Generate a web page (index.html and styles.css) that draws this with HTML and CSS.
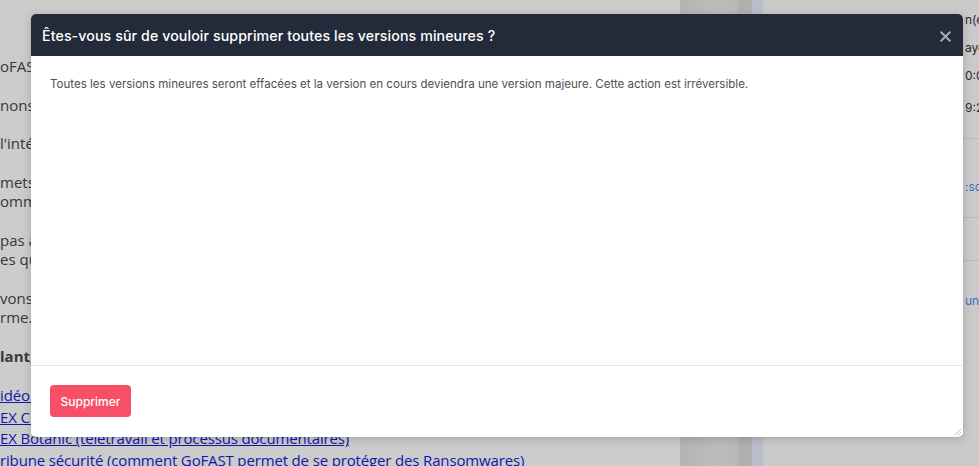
FILE: index.html
```html
<!DOCTYPE html>
<html lang="fr">
<head>
<meta charset="utf-8">
<title>Supprimer les versions mineures</title>
<link rel="stylesheet" href="styles.css">
</head>
<body>
<div class="page">
  <div class="main">
    <div class="top-strip"></div>
    <p class="para">oFAST est une plateforme collaborative souveraine.</p>
    <p class="para">nonsieur, madame, voici la présentation de la solution.</p>
    <p class="para">l'intégration avec vos outils existants est simple.</p>
    <p class="para">mets de partager vos documents et de travailler en<br>ommunauté avec vos collègues en toute sécurité.</p>
    <p class="para">pas à pas, découvrez les fonctionnalités principales<br>es que vous pouvez utiliser au quotidien.</p>
    <p class="para">vons préparé une série de vidéos sur la<br>rme.</p>
    <p class="para bold">lant, voici les liens :</p>
    <ul class="links">
      <li><a href="#">idéo de présentation de GoFAST</a></li>
      <li><a href="#">EX CD (retour d'expérience client)</a></li>
      <li><a href="#">EX Botanic (teletravail et processus documentaires)</a></li>
      <li><a href="#">ribune sécurité (comment GoFAST permet de se protéger des Ransomwares)</a></li>
    </ul>
  </div>
  <div class="gutter"></div>
  <div class="gutter-mid"></div>
  <div class="gutter-blue"></div>
  <div class="aside">
    <div class="aside-row first">n(e)</div>
    <div class="aside-row">ayonnement</div>
    <div class="aside-row">0:03</div>
    <div class="aside-row last">9:27</div>
    <div class="aside-sep"></div>
    <div class="aside-row link">:sources</div>
    <div class="aside-sep"></div>
    <div class="aside-sep gap"></div>
    <div class="aside-row link low">unité</div>
  </div>
</div>

<div class="overlay"></div>

<div class="modal" role="dialog" aria-modal="true">
  <div class="modal-header">
    <h1 class="modal-title">Êtes-vous sûr de vouloir supprimer toutes les versions mineures ?</h1>
    <button class="modal-close" aria-label="Fermer">
      <svg width="11" height="11" viewBox="0 0 11 11"><path d="M1.2 1.2L9.8 9.8M9.8 1.2L1.2 9.8" stroke="currentColor" stroke-width="2" stroke-linecap="round"/></svg>
    </button>
  </div>
  <div class="modal-body">
    <p class="modal-text">Toutes les versions mineures seront effacées et la version en cours deviendra une version majeure. Cette action est irréversible.</p>
  </div>
  <div class="modal-footer">
    <button class="btn-danger">Supprimer</button>
  </div>
  <div class="resize-handle"></div>
</div>
</body>
</html>
```

FILE: styles.css
```css
html, body {
  margin: 0;
  padding: 0;
}
body {
  width: 979px;
  height: 466px;
  overflow: hidden;
  position: relative;
  background: #fff;
  font-family: "Open Sans", "Noto Sans", sans-serif;
}
.page {
  display: flex;
  height: 466px;
}
.main {
  width: 680px;
  flex: none;
  overflow: hidden;
  color: #474747;
  font-size: 15px;
  line-height: 19.5px;
  white-space: nowrap;
}
.top-strip {
  height: 57px;
}
.para {
  margin: 0 0 19px 0;
}
.bold {
  font-weight: 700;
}
.links {
  list-style: none;
  margin: 0;
  padding: 0;
  font-size: 15px;
  letter-spacing: -0.15px;
  line-height: 21.7px;
}
.links a {
  color: #1b1bd6;
  text-decoration: underline;
}
.gutter {
  width: 58px;
  flex: none;
  background: linear-gradient(90deg, #e2e2e2, #ececec 60%, #e8e8e8);
}
.gutter-mid {
  width: 14px;
  flex: none;
  background: #dddddd;
}
.gutter-blue {
  width: 11px;
  flex: none;
  background: #eaeefa;
}
.aside {
  flex: 1;
  overflow: hidden;
  background: #fdfdfd;
  padding-left: 202px;
  font-family: "Inter", "Noto Sans", sans-serif;
  font-size: 12px;
  color: #333;
  white-space: nowrap;
}
.aside-row {
  height: 28px;
  line-height: 28px;
}
.aside-row.first {
  margin-top: 6px;
}
.aside-row.last {
  height: 32px;
  line-height: 36px;
}
.aside-sep {
  margin-left: -202px;
  height: 1px;
  background: #e6e6e6;
  margin-top: 16px;
}
.aside-row.link {
  color: #4a8cf0;
  margin-top: 34px;
  height: 28px;
}
.aside-sep.gap {
  margin-top: 42px;
}
.aside-row.low {
  margin-top: 26px;
}

.overlay {
  position: absolute;
  inset: 0;
  background: rgba(0, 0, 0, 0.2);
}

.modal {
  position: absolute;
  left: 31px;
  top: 14px;
  width: 932px;
  height: 423px;
  background: #fff;
  border-radius: 5px;
  box-shadow: 0 2px 10px rgba(0, 0, 0, 0.18);
  display: flex;
  flex-direction: column;
  overflow: hidden;
  font-family: "Inter", "Noto Sans", sans-serif;
}
.modal-header {
  height: 42px;
  flex: none;
  background: #232a3a;
  display: flex;
  align-items: center;
  justify-content: space-between;
  padding: 0 12px 0 11px;
}
.modal-title {
  margin: 0;
  color: #ffffff;
  font-size: 14.2px;
  font-weight: 500;
  letter-spacing: 0.1px;
}
.modal-close {
  border: 0;
  background: transparent;
  padding: 0;
  margin-top: 2px;
  color: #a9acb4;
  display: flex;
}
.modal-body {
  flex: 1;
  padding: 20px 19px;
}
.modal-text {
  margin: 0;
  font-size: 11.55px;
  line-height: 16px;
  color: #4f4f55;
}
.modal-footer {
  height: 72px;
  flex: none;
  box-sizing: border-box;
  border-top: 1px solid #e8e8e8;
  padding: 19px 19px 0;
}
.btn-danger {
  width: 81px;
  height: 32px;
  border: 0;
  border-radius: 4px;
  background: #f74f65;
  color: #fff;
  font-family: "Inter", "Noto Sans", sans-serif;
  font-size: 12px;
  font-weight: 500;
}
.resize-handle {
  position: absolute;
  right: 2px;
  bottom: 2px;
  width: 6px;
  height: 6px;
  background: linear-gradient(135deg, transparent 45%, #bbb 45%, #bbb 55%, transparent 55%, transparent 70%, #bbb 70%, #bbb 80%, transparent 80%);
}
```
